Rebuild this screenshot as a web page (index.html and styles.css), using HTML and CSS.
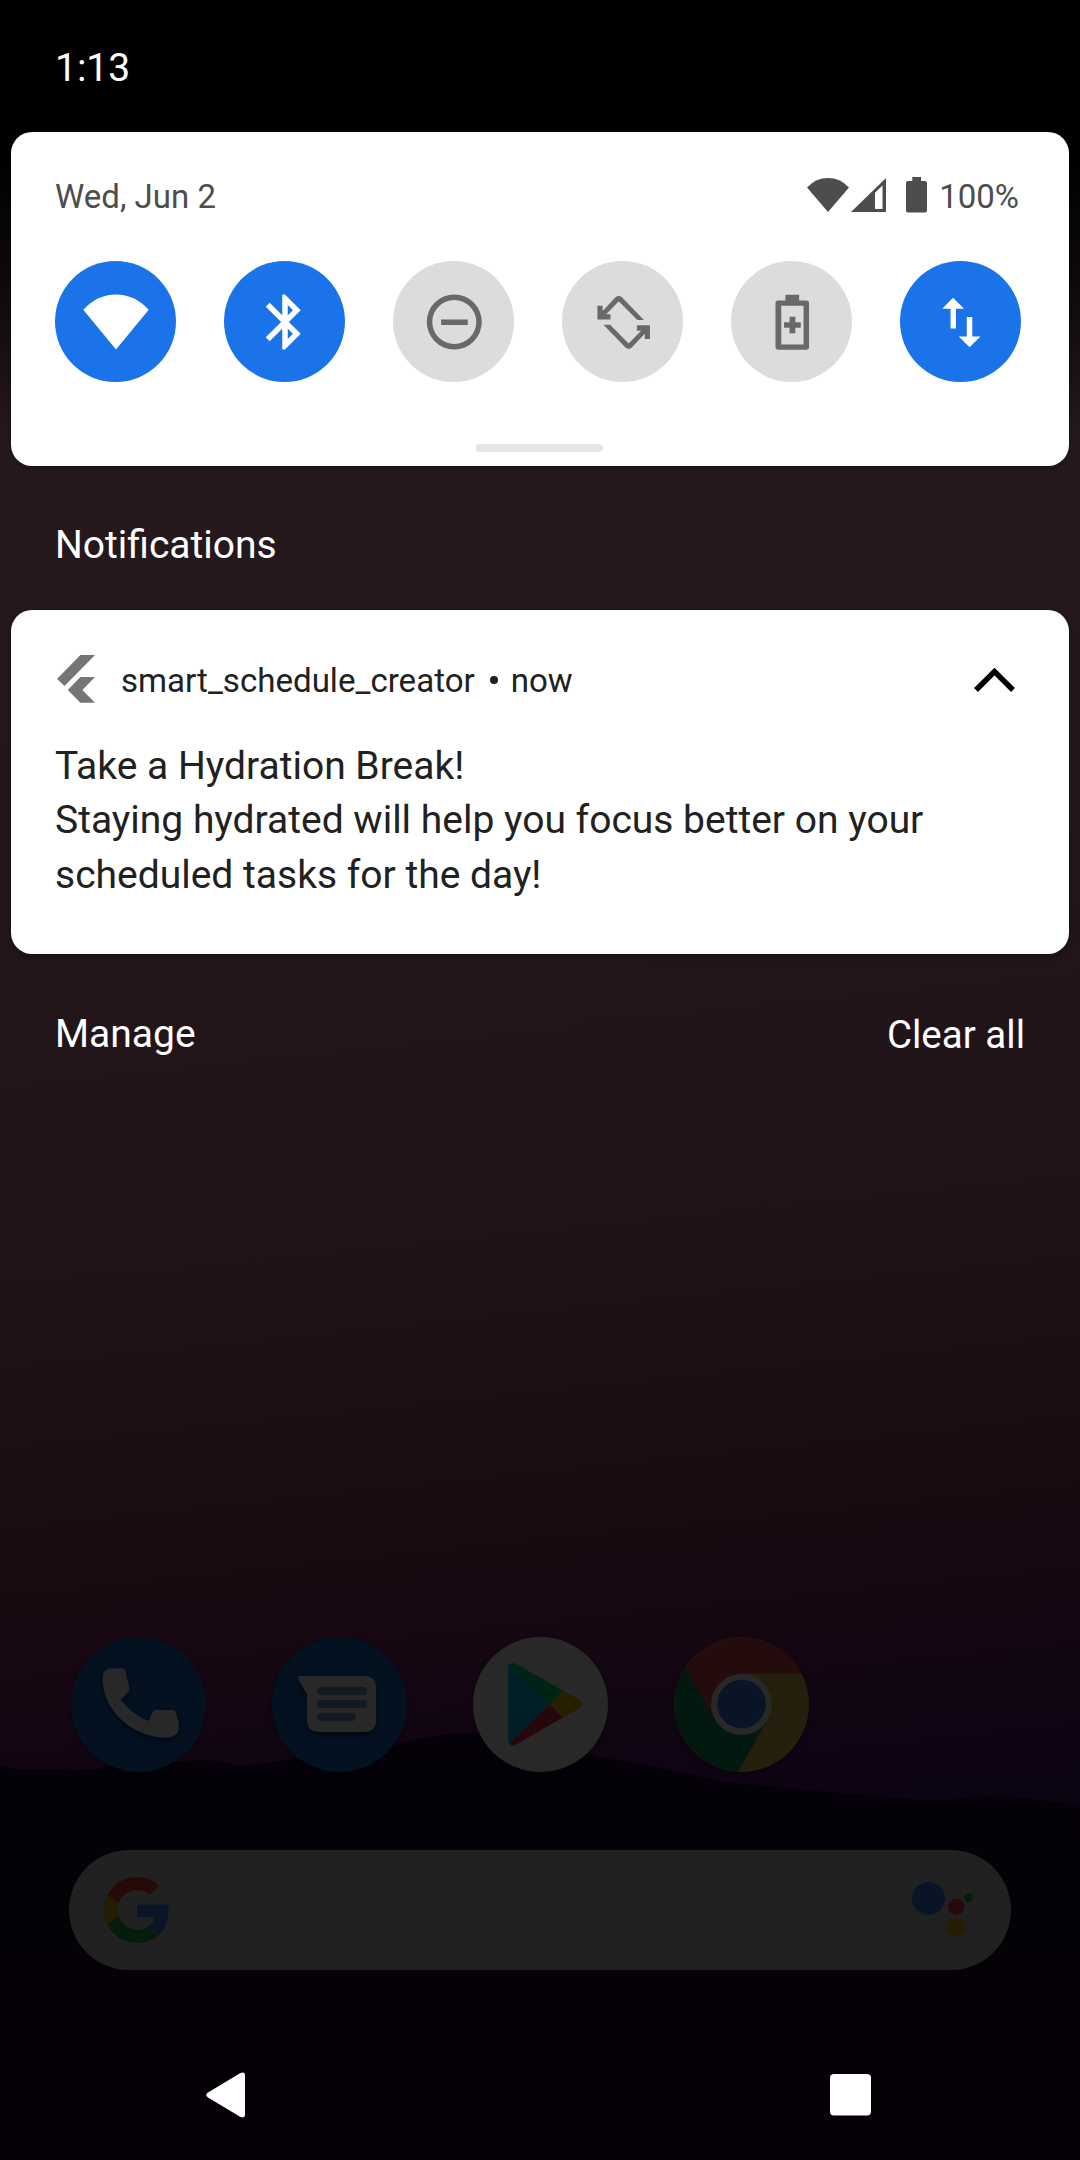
FILE: index.html
```html
<!DOCTYPE html>
<html lang="en">
<head>
<meta charset="utf-8">
<title>Notification shade</title>
<link rel="stylesheet" href="styles.css">
</head>
<body>
<div class="screen">
  <svg class="hills" viewBox="0 0 1080 440" preserveAspectRatio="none">
    <defs>
      <linearGradient id="ground" x1="0" y1="0" x2="0" y2="1">
        <stop offset="0" stop-color="#060109"/>
        <stop offset=".5" stop-color="#040107"/>
        <stop offset="1" stop-color="#050006"/>
      </linearGradient>
    </defs>
    <path fill="url(#ground)" d="M0 45Q12 49 24 49L76 50Q90 50 117 45Q160 42 207 40Q225 42 241 46L310 37L386 27L427 17Q450 13 475 13Q540 18 606 38L661 48L723 62L778 67L895 78Q930 81 957 79Q985 75 1005 76Q1050 80 1080 86V440H0Z"/>
  </svg>

  <header class="status"><span class="clock">1:13</span></header>

  <section class="card quick">
    <div class="quick-head">
      <span class="date">Wed, Jun 2</span>
      <div class="indicators">
        <svg class="ind-wifi" viewBox="0 0 42 34"><path d="M21 34L0 9.4Q9 0 21 0T42 9.4Z"/></svg>
        <svg class="ind-signal" viewBox="0 0 35 34"><path fill-rule="evenodd" d="M35 0V34H0ZM24 14.8V31H31.5V7.6Z"/></svg>
        <svg class="ind-battery" viewBox="0 0 21 36"><path d="M6.3 0H15V4H19Q21 4 21 6V33.500Q21 35.500 19 35.500H2Q0 35.500 0 33.500V6Q0 4 2 4H6.300Z"/></svg>
        <span class="percent">100%</span>
      </div>
    </div>
    <div class="tiles">
      <div class="tile on"><svg viewBox="0 0 24 24"><path d="M12 22L.1 7.550Q5.200 2 12 2T23.900 7.550Z"/></svg></div>
      <div class="tile on"><svg viewBox="0 0 24 24"><path d="M17.710 7.710L12 2h-1v7.590L6.410 5 5 6.410 10.590 12 5 17.590 6.410 19 11 14.410V22h1l5.710-5.710-4.300-4.290 4.300-4.290zM13 5.830l1.880 1.880L13 9.590V5.830zM14.880 16.290L13 18.170v-3.760l1.880 1.880z"/></svg></div>
      <div class="tile"><svg viewBox="0 0 24 24"><path fill-rule="evenodd" d="M12.100 2a10 10 0 1 0 0 20 10 10 0 0 0 0-20zm0 18a8 8 0 1 1 0-16 8 8 0 0 1 0 16zM7.300 11.100h9.700v2H7.300z"/></svg></div>
      <div class="tile"><svg viewBox="0 0 24 24"><path d="M2.700 6.100H4.600V8L9.300 3Q10.450 2 11.600 3L19.600 11.300H17.200L10.450 4.450L5.900 9.150H7.450V11.100H2.700Z"/><path transform="rotate(180 12.250 12.150)" d="M2.700 6.100H4.600V8L9.300 3Q10.450 2 11.600 3L19.600 11.300H17.200L10.450 4.450L5.900 9.150H7.450V11.100H2.700Z"/></svg></div>
      <div class="tile"><svg viewBox="0 0 24 24"><path fill-rule="evenodd" d="M9.600 2.100H14.600V4.150H17.200Q18.200 4.150 18.200 5.150V21.100Q18.200 22.100 17.200 22.100H7Q6 22.100 6 21.100V5.150Q6 4.150 7 4.150H9.600ZM8.100 6.050V20.150H16.200V6.050ZM11.100 10.100H13.200V12.050H15.200V14.100H13.200V16.100H11.100V14.100H9.100V12.050H11.100Z"/></svg></div>
      <div class="tile on"><svg viewBox="0 0 24 24"><path d="M9.100 3.200L13.100 7.150H10.150V14.350H8.200V7.150H5.200ZM14.100 10.200H16.100V17.250H19.100L15.100 21.200L11.200 17.250H14.100Z"/></svg></div>
    </div>
    <div class="handle"></div>
  </section>

  <h1 class="heading">Notifications</h1>

  <article class="card note">
    <div class="note-head">
      <svg class="app-icon" viewBox="0 0 38 48"><path d="M23.400 0H38L7.500 31L0 24ZM23.400 22H38L25.400 35L38 47.700H23.400L10.800 35Z"/></svg>
      <span class="app-name">smart_schedule_creator</span>
      <span class="dot"></span>
      <span class="when">now</span>
      <svg class="chevron" viewBox="0 0 41 24"><path d="M2 22L20.500 3.600L39 22"/></svg>
    </div>
    <p class="note-text">Take a Hydration Break!<br>Staying hydrated will help you focus better on your scheduled tasks for the day!</p>
  </article>

  <div class="actions"><span>Manage</span><span class="clear">Clear all</span></div>

  <div class="dock">
    <svg class="app" viewBox="0 0 135 135">
      <circle cx="67.500" cy="67.500" r="67.500" fill="#031121"/>
      <path class="lift" fill="#282828" d="M38 31.500H51Q54 31.500 54.500 34.500L58.500 51Q59 53 57.500 55L50 62.500Q60 77 77.500 84L81 76Q82.500 73 85.500 73H101Q104 73 105 76Q108 84 108 91Q107 100 96 100.700Q76 101 58 89Q32 70 31.500 41Q31.500 33 38 31.500Z"/>
      <path stroke="#202121" fill="none" d="M50 63L42 71M77.500 84L71 96"/>
    </svg>
    <svg class="app" viewBox="0 0 135 135">
      <circle cx="67.500" cy="67.500" r="67.500" fill="#031121"/>
      <path class="lift" fill="#282828" d="M28 39H92Q104 39 104 51V83Q104 95 92 95H47Q35 95 35 83V57L26.500 43Q25 39 28 39Z"/>
      <path stroke="#141a23" stroke-width="8" stroke-linecap="round" d="M49 54H91M49 67H91M49 80H80"/>
    </svg>
    <svg class="app" viewBox="0 0 135 135">
      <circle cx="67.500" cy="67.500" r="67.500" fill="#282828"/>
      <path fill="#001f27" d="M35 31Q35 28 37 27L77 67.500L37 107.500Q35 106 35 103Z"/>
      <path fill="#002414" d="M36 28Q39 24.500 43 27L90 53.500L77 67.500Z"/>
      <path fill="#26070c" d="M36 106.500Q39 110 43 107.500L90 80.500L77 67.500Z"/>
      <path fill="#272000" d="M90 53.500L106.500 63Q112 67 106.500 71L90 80.500L77 67.500Z"/>
    </svg>
    <svg class="app" viewBox="0 0 135 135">
      <circle cx="67.500" cy="67.500" r="67.500" fill="#24200d"/>
      <path fill="#230c0b" d="M11 31A67.500 67.500 0 0 1 127.500 36.500H67.500V67.500L39 79Z"/>
      <path fill="#03180f" d="M11 31A67.500 67.500 0 0 0 64 135L94 82L67.500 67.500L40 80Z"/>
      <circle cx="67.500" cy="67.500" r="30.500" fill="#282828"/>
      <circle cx="67.500" cy="67" r="24.300" fill="#0a1427"/>
    </svg>
  </div>

  <div class="search">
    <svg class="google" viewBox="0 0 48 48">
      <path fill="#260a08" d="M24 9.500c3.540 0 6.710 1.220 9.210 3.600l6.850-6.850C35.900 2.380 30.470 0 24 0 14.620 0 6.510 5.380 2.560 13.220l7.980 6.190C12.430 13.720 17.740 9.500 24 9.500z"/>
      <path fill="#0a1427" d="M46.980 24.550c0-1.570-.15-3.090-.38-4.550H24v9.020h12.940c-.58 2.960-2.260 5.480-4.780 7.180l7.730 6c4.510-4.180 7.090-10.360 7.090-17.650z"/>
      <path fill="#261d00" d="M10.530 28.590c-.48-1.450-.76-2.990-.76-4.590s.27-3.140.76-4.590l-7.980-6.190C.92 16.460 0 20.120 0 24c0 3.880.92 7.540 2.560 10.780l7.970-6.190z"/>
      <path fill="#051b0c" d="M24 48c6.480 0 11.930-2.130 15.890-5.810l-7.730-6c-2.150 1.450-4.920 2.300-8.160 2.300-6.260 0-11.570-4.220-13.470-9.910l-7.980 6.190C6.510 42.620 14.620 48 24 48z"/>
    </svg>
    <svg class="assistant" viewBox="0 0 61 56">
      <circle cx="16.500" cy="16.500" r="16.500" fill="#0a1427"/>
      <circle cx="44.200" cy="24.800" r="8.200" fill="#260a0a"/>
      <circle cx="44.200" cy="45.500" r="9.600" fill="#261d00"/>
      <circle cx="56.300" cy="15.500" r="4.200" fill="#051b0c"/>
    </svg>
  </div>

  <nav class="nav">
    <svg class="back" viewBox="0 0 39 46"><path d="M34.500 1Q39 -.5 39 3V43Q39 46.500 34.500 45L2 25.500Q-1.500 23 2 20.500Z"/></svg>
    <svg class="recent" viewBox="0 0 41 42"><rect width="41" height="41.500" rx="4"/></svg>
  </nav>
</div>
</body>
</html>
```
FILE: styles.css
```css
* { box-sizing: border-box; }
body { margin: 0; background: #000; }

.screen {
  position: relative;
  display: flex;
  flex-direction: column;
  width: 1080px;
  height: 2160px;
  overflow: hidden;
  font-family: Roboto, sans-serif;
  font-size: 39px;
  color: #fff;
  background:
    linear-gradient(#000 0, #000 150px, rgba(0, 0, 0, .6) 290px, transparent 440px),
    linear-gradient(174deg, #25191c 0, #25191c 560px, #23171c 800px, #21151a 1080px, #201216 1280px, #1c0e14 1440px, #1a0b12 1560px, #160711 1670px, #120513 1770px, #0c0313 1880px);
}
.hills { position: absolute; left: 0; top: 1720px; width: 1080px; height: 440px; }

.status { height: 132px; padding: 46px 55px 0; line-height: 45px; }
.clock { display: block; }

.card { margin: 0 11px; border-radius: 21px; background: #fff; box-shadow: 0 2px 6px rgba(0, 0, 0, .3); }

.quick { display: flex; flex-direction: column; height: 334px; padding: 44px 44px 14px; color: #4d4d4d; fill: #4d4d4d; }
.quick-head { display: flex; justify-content: space-between; height: 40px; font-size: 33px; line-height: 42px; }
.indicators { display: flex; align-items: flex-start; padding-right: 6px; }
.ind-wifi { width: 42px; height: 34px; margin-top: 2px; }
.ind-signal { width: 35px; height: 34px; margin: 2px 20px 0 2px; }
.ind-battery { width: 21px; height: 36px; margin: 1px 12px 0 0; }

.tiles { display: flex; justify-content: space-between; margin: 45px 4px 0 0; }
.tile { display: grid; place-items: center; width: 121px; height: 121px; border-radius: 50%; background: #dcdcdc; fill: #696969; }
.tile.on { background: #1a73e8; fill: #fff; }
.tile svg { width: 66px; height: 66px; }
.handle { width: 127px; height: 8px; margin: auto 0 0 421px; border-radius: 4px; background: #e4e4e4; }

.heading { margin: 0; height: 144px; padding: 0 55px; font-size: 39px; font-weight: 400; line-height: 159px; }

.note { height: 344px; padding: 45px 44px 0; color: #212121; }
.note-head { display: flex; align-items: center; height: 48px; font-size: 33.1px; line-height: 48px; }
.app-name, .when { padding-top: 3px; }
.app-icon { width: 38px; height: 48px; margin: 0 26px 0 2px; fill: #757575; }
.dot { width: 8px; height: 8px; margin: 2px 13px 0 15px; border-radius: 50%; background: #212121; }
.chevron { width: 41px; height: 24px; margin: 1px 10px 0 auto; fill: none; stroke: #000; stroke-width: 5.5; }
.note-text { margin: 36px 0 0; line-height: 54.3px; }

.actions { display: flex; justify-content: space-between; padding: 58px 55px 0; line-height: 45px; }
.clear { font-size: 38.5px; }

.dock { position: relative; display: flex; gap: 66px; height: 135px; margin: 580px 71px 0; }
.app { width: 135px; height: 135px; filter: drop-shadow(0 2px 2px rgba(0, 0, 0, .35)); }
.lift { filter: drop-shadow(0 3px 3px rgba(0, 0, 0, .5)); }

.search { position: relative; display: flex; justify-content: space-between; align-items: flex-start; height: 120px; margin: 78px 69px 0; padding: 27px 38px 0 35px; border-radius: 60px; background: #212121; }
.google { width: 66px; height: 66px; }
.assistant { width: 61px; height: 56px; margin-top: 5px; }

.nav { position: relative; display: flex; justify-content: space-between; padding: 102px 209px 0 206px; fill: #fff; }
.back { width: 39px; height: 46px; }
.recent { width: 41px; height: 42px; margin-top: 2px; }
```
